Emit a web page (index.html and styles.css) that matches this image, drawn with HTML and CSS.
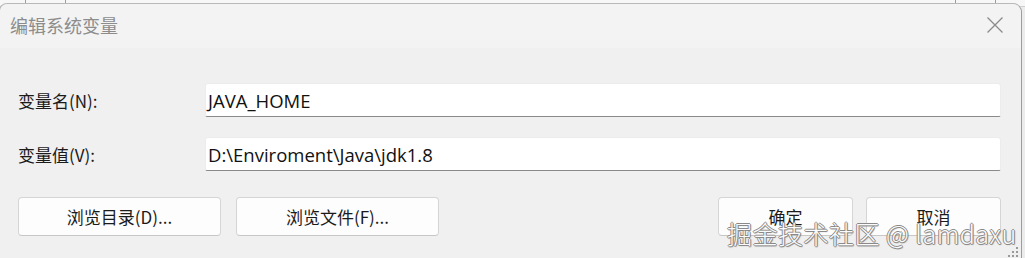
FILE: index.html
```html
<!DOCTYPE html>
<html lang="zh-CN">
<head>
<meta charset="utf-8">
<title>编辑系统变量</title>
<link rel="stylesheet" href="styles.css">
</head>
<body>
<div class="backdrop">
  <span class="bd-line l1"></span><span class="bd-line l2"></span><span class="bd-line l3"></span><span class="bd-line l4"></span>
</div>
<div class="window">
  <div class="titlebar">
    <span class="title">编辑系统变量</span>
    <button class="close" aria-label="关闭">
      <svg width="18" height="18" viewBox="0 0 18 18"><path d="M1.5 1.5 L16.5 16.5 M16.5 1.5 L1.5 16.5" stroke="#8a8a8a" stroke-width="1.3" fill="none"/></svg>
    </button>
  </div>
  <div class="content">
    <div class="fields">
      <label class="label">变量名(N):</label>
      <div class="input">JAVA_HOME</div>
      <label class="label">变量值(V):</label>
      <div class="input">D:\Enviroment\Java\jdk1.8</div>
    </div>
    <div class="actions">
      <div class="group">
        <button class="btn wide">浏览目录(D)...</button>
        <button class="btn wide">浏览文件(F)...</button>
      </div>
      <div class="group right">
        <button class="btn">确定</button>
        <button class="btn">取消</button>
      </div>
    </div>
  </div>
  <div class="watermark">掘金技术社区 @ lamdaxu</div>
  <svg class="grip" width="12" height="12" viewBox="0 0 12 12">
    <rect x="9" y="1" width="2" height="2" fill="#9a9a9a"/>
    <rect x="5" y="5" width="2" height="2" fill="#9a9a9a"/>
    <rect x="9" y="5" width="2" height="2" fill="#9a9a9a"/>
    <rect x="1" y="9" width="2" height="2" fill="#9a9a9a"/>
    <rect x="5" y="9" width="2" height="2" fill="#9a9a9a"/>
    <rect x="9" y="9" width="2" height="2" fill="#9a9a9a"/>
  </svg>
</div>
</body>
</html>
```
FILE: styles.css
```css
html, body {
  margin: 0;
  padding: 0;
  height: 100%;
  overflow: hidden;
}
body {
  background: #ececec;
  font-family: "Noto Sans", "Noto Sans CJK SC", sans-serif;
  position: relative;
}
.backdrop {
  position: absolute;
  left: 0;
  top: 0;
  width: 100%;
  height: 6px;
  background: #f7f7f7;
  border-bottom: 1px solid #cfcfcf;
}
.bd-line {
  position: absolute;
  top: 0;
  width: 1px;
  height: 6px;
  background: #9c9c9c;
}
.l1 { left: 25px; }
.l2 { left: 65px; }
.l3 { left: 955px; }
.l4 { left: 995px; }
.window {
  position: relative;
  margin-top: 3px;
  margin-left: -1px;
  width: 1021px;
  height: 254px;
  background: #f0f0f0;
  border: 1px solid #b9b9b9;
  border-bottom: none;
  border-right-color: #9d9d9d;
  border-radius: 8px 9px 0 0;
  overflow: hidden;
}
.titlebar {
  height: 44px;
  display: flex;
  align-items: center;
  justify-content: space-between;
  padding: 0 10px 0 10px;
  background: #f3f3f3;
  border-radius: 8px 9px 0 0;
}
.title {
  font-family: "Noto Sans CJK SC", sans-serif;
  font-size: 18px;
  color: #8c8c8c;
  margin-top: -2px;
}
.close {
  background: none;
  border: none;
  padding: 0;
  width: 18px;
  height: 18px;
  margin-right: 7px;
  margin-top: -2px;
}
.close svg { display: block; }
.content {
  padding: 35px 20px 0 18px;
}
.fields {
  display: grid;
  grid-template-columns: 187px 1fr;
  row-gap: 20px;
  align-items: center;
}
.label {
  font-family: "Noto Sans CJK SC", sans-serif;
  font-size: 17px;
  color: #1b1b1b;
}
.input {
  height: 34px;
  box-sizing: border-box;
  background: #ffffff;
  border: 1px solid #ececec;
  border-bottom: 1px solid #8a8a8a;
  border-radius: 3px 3px 2px 2px;
  padding: 0 2px;
  font-family: "Open Sans", "Noto Sans CJK SC", sans-serif;
  font-size: 18.5px;
  color: #111;
  display: flex;
  align-items: center;
}
.actions {
  display: flex;
  justify-content: space-between;
  margin-top: 26px;
}
.group {
  display: flex;
  gap: 15px;
}
.group.right { gap: 13px; }
.btn {
  width: 135px;
  height: 39px;
  box-sizing: border-box;
  background: #fdfdfd;
  border: 1px solid #d5d5d5;
  border-bottom-color: #c7c7c7;
  border-radius: 4px;
  font-family: "Noto Sans CJK SC", sans-serif;
  font-size: 17px;
  color: #1b1b1b;
  padding: 0;
}
.btn.wide { width: 203px; }
.watermark {
  position: absolute;
  left: 727px;
  top: 211px;
  font-family: "Noto Sans CJK SC", sans-serif;
  font-weight: 300;
  font-size: 25px;
  color: #fbfbfb;
  letter-spacing: 0.5px;
  white-space: nowrap;
  text-shadow:
    1px 0 0 #8a8a8a, -1px 0 0 #8a8a8a, 0 1px 0 #8a8a8a, 0 -1px 0 #8a8a8a,
    1px 1px 1px rgba(90, 90, 90, 0.6);
}
.grip {
  position: absolute;
  left: 1007px;
  top: 242px;
}
```
